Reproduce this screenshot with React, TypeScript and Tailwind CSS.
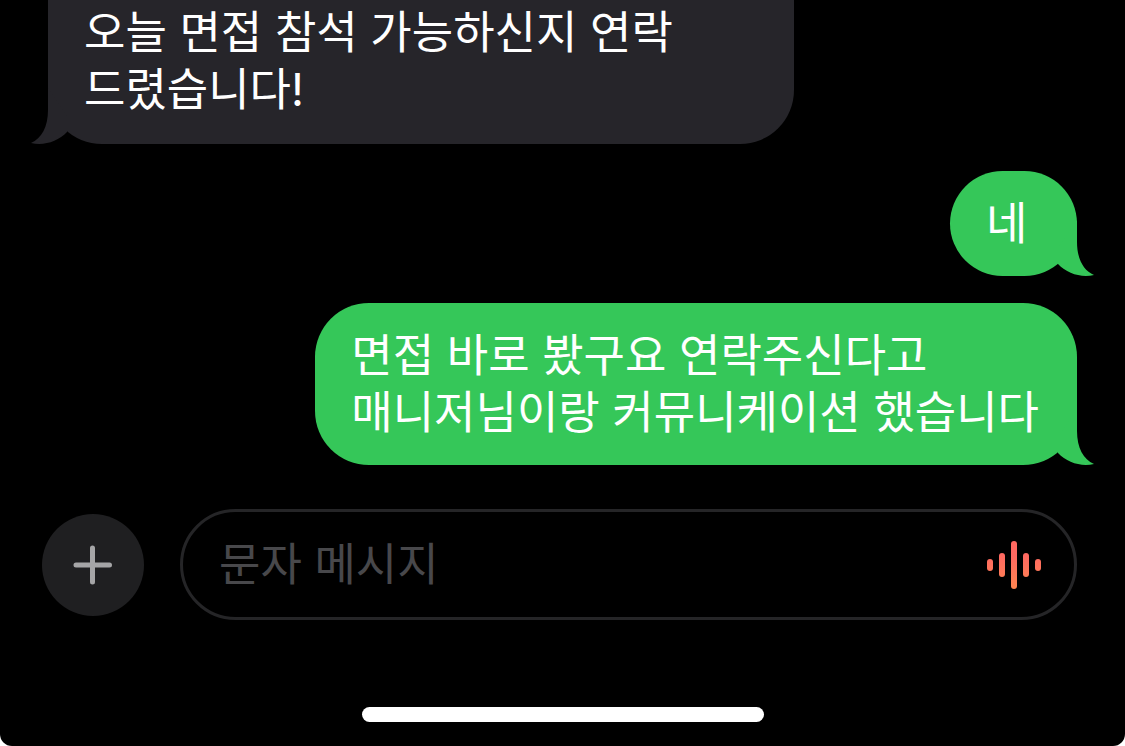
import type { ReactNode } from "react";
import { clsx } from "clsx";

interface Message {
    id: number;
    text: string;
    sent: boolean;
    continued?: boolean;
}

const messages: Message[] = [
    { id: 1, text: "오늘 면접 참석 가능하신지 연락 드렸습니다!", sent: false, continued: true },
    { id: 2, text: "네", sent: true },
    { id: 3, text: "면접 바로 봤구요 연락주신다고\n매니저님이랑 커뮤니케이션 했습니다", sent: true },
];

function Tail({ sent }: { sent: boolean }) {
    return (
        <svg
            width="54"
            height="56"
            viewBox="0 0 54 56"
            aria-hidden="true"
            className={clsx(
                "absolute bottom-0",
                sent ? "-right-[17px] fill-[#35c759]" : "-left-[17px] -scale-x-100 fill-[#26252a]"
            )}>
            <path d="M37 0V22C37 39 43.500 50.500 54 55C41 58 27 53.500 18 44V28Z" />
        </svg>
    )
}

function Bubble({ sent, continued = false, children }: { sent: boolean; continued?: boolean; children: ReactNode }) {
    return (
        <li
            className={clsx(
                "relative min-w-[127px] max-w-full pl-9 pr-[38px] whitespace-pre-line break-keep",
                sent ? "self-end bg-[#35c759]" : "self-start bg-[#26252a] sm:max-w-[746px]",
                continued ? "rounded-b-[54px] pt-1 pb-[26px]" : "rounded-[54px] py-6"
            )}>
            {children}
            <Tail sent={sent} />
        </li>
    )
}

function Composer() {
    return (
        <form className="flex items-center gap-9 pl-[42px] pr-12" onSubmit={(e) => e.preventDefault()}>
            <button
                type="button"
                aria-label="추가"
                className="flex size-[102px] shrink-0 items-center justify-center rounded-full bg-[#1f1f21]">
                <svg width="40" height="40" viewBox="0 0 40 40" className="stroke-[#a5a5a7]" aria-hidden="true">
                    <path d="M19.500 3V37M3 20H36.500" strokeWidth="5" strokeLinecap="round" />
                </svg>
            </button>

            <div className="flex h-[111px] min-w-0 flex-1 items-center rounded-full border-3 border-[#252527] pl-9 pr-[33px]">
                <input
                    type="text"
                    aria-label="문자 메시지"
                    placeholder="문자 메시지"
                    className="min-w-0 flex-1 bg-transparent text-white outline-none placeholder:text-[#48484b]" />

                <button type="button" aria-label="음성 메시지">
                    <svg width="54" height="48" viewBox="0 0 54 48" aria-hidden="true">
                        <defs>
                            <linearGradient id="wave" x1="0" y1="0" x2="0" y2="48" gradientUnits="userSpaceOnUse">
                                <stop offset="0.3" stopColor="#ff6961" />
                                <stop offset="1" stopColor="#ff8550" />
                            </linearGradient>
                        </defs>
                        <g fill="url(#wave)">
                            <rect x="0" y="18" width="6" height="12" rx="3" />
                            <rect x="12" y="12" width="6" height="24" rx="3" />
                            <rect x="24" y="0" width="6" height="48" rx="3" />
                            <rect x="36" y="12" width="6" height="24" rx="3" />
                            <rect x="48" y="18" width="6" height="12" rx="3" />
                        </g>
                    </svg>
                </button>
            </div>
        </form>
    )
}

export default function App() {
    return (
        <div className="bg-white">
            <main className="flex min-h-screen flex-col rounded-b-xl bg-black font-['Inter','Noto_Sans_CJK_KR',sans-serif] text-[45px] leading-[57px] text-white">
                <ul className="mb-11 flex flex-col gap-[27px] px-12">
                    {messages.map((message) => (
                        <Bubble key={message.id} sent={message.sent} continued={message.continued}>
                            {message.text}
                        </Bubble>
                    ))}
                </ul>

                <Composer />

                <div className="mx-auto mt-auto mb-6 h-[15px] w-[402px] max-w-full rounded-full bg-white" />
            </main>
        </div>
    )
}
